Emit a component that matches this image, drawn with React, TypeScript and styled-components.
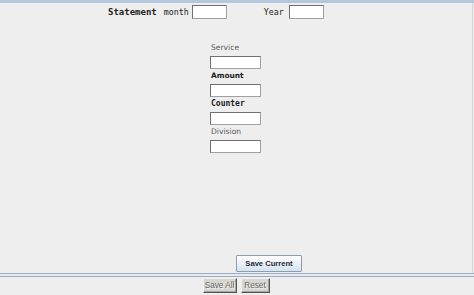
import React from 'react';
import styled, { createGlobalStyle } from 'styled-components';

const GlobalStyle = createGlobalStyle`
  html, body {
    margin: 0;
    padding: 0;
    background: #eeeeee;
  }
  * {
    box-sizing: border-box;
  }
`;

const Frame = styled.div`
  width: 474px;
  height: 295px;
  display: flex;
  flex-direction: column;
  background: #eeeeee;
  font-family: "DejaVu Sans", sans-serif;
  color: #222;
  overflow: hidden;
`;

const TopBar = styled.div`
  height: 3px;
  background: #b5c7dc;
  flex-shrink: 0;
`;

const Main = styled.div`
  flex: 1;
  display: flex;
  flex-direction: column;
  border-right: 1px solid #d6d6d6;
  margin-right: 1px;
`;

const Header = styled.div`
  height: 18px;
  display: flex;
  align-items: center;
  padding-left: 108px;
`;

const MonoLabel = styled.span<{ $bold?: boolean; $gap?: number }>`
  font-family: "DejaVu Sans Mono", monospace;
  font-size: ${(p) => (p.$bold ? 9 : 8.3)}px;
  font-weight: ${(p) => (p.$bold ? 'bold' : 'normal')};
  color: #222;
  margin-right: ${(p) => p.$gap ?? 0}px;
  white-space: nowrap;
`;

const TextBox = styled.input<{ $w: number; $h?: number; $gap?: number }>`
  display: block;
  width: ${(p) => p.$w}px;
  height: ${(p) => p.$h ?? 14}px;
  padding: 0;
  font-size: 8px;
  margin: 0 ${(p) => p.$gap ?? 0}px 0 0;
  background: #ffffff;
  border: 1px solid #a0a0a0;
  border-top-color: #707070;
  border-left-color: #707070;
  outline: none;
`;

const Form = styled.div`
  margin-top: 22px;
  margin-left: 210px;
  display: flex;
  flex-direction: column;
`;

const Field = styled.div`
  display: flex;
  flex-direction: column;
  margin-bottom: 2px;
`;

const FieldLabel = styled.span<{ $kind: 'plain' | 'bold' | 'mono' }>`
  height: 10px;
  line-height: 10px;
  padding-left: 1px;
  margin-bottom: 3px;
  white-space: nowrap;
  font-family: ${(p) =>
    p.$kind === 'mono' ? '"DejaVu Sans Mono", monospace' : '"DejaVu Sans", sans-serif'};
  font-size: ${(p) => (p.$kind === 'plain' ? 7.6 : p.$kind === 'bold' ? 7.4 : 8)}px;
  font-weight: ${(p) => (p.$kind === 'plain' ? 'normal' : 600)};
  color: ${(p) => (p.$kind === 'plain' ? '#5a5a5a' : '#222')};
`;

const Spacer = styled.div`
  flex: 1;
`;

const SaveRow = styled.div`
  display: flex;
  padding-left: 236px;
  margin-bottom: 1px;
`;

const PrimaryButton = styled.button`
  width: 66px;
  height: 17px;
  padding: 0;
  white-space: nowrap;
  font-family: "Liberation Sans", Arial, sans-serif;
  font-size: 7.6px;
  font-weight: bold;
  color: #1e2a3a;
  background: linear-gradient(#ffffff, #d6e2ef);
  border: 1px solid #8d9cae;
  border-radius: 1px;
`;

const Divider = styled.div`
  height: 4px;
  border-top: 1px solid #9eafc3;
  border-bottom: 1px solid #9eafc3;
  background: #e4ebf2;
  flex-shrink: 0;
`;

const Footer = styled.div`
  height: 18px;
  display: flex;
  justify-content: center;
  align-items: flex-start;
  gap: 4px;
  padding-top: 1px;
  padding-right: 2px;
  flex-shrink: 0;
`;

const GreyButton = styled.button<{ $w: number }>`
  width: ${(p) => p.$w}px;
  height: 15px;
  padding: 0;
  white-space: nowrap;
  font-family: "Liberation Sans", Arial, sans-serif;
  font-size: 8.2px;
  color: #666666;
  text-shadow: 1px 1px 0 #f4f4f4;
  background: #d8d6d0;
  border: 1px solid #f2f2f0;
  border-right-color: #555451;
  border-bottom-color: #555451;
  box-shadow: inset -1px -1px 0 #a6a49e;
`;

const fields: { label: string; kind: 'plain' | 'bold' | 'mono' }[] = [
  { label: 'Service', kind: 'plain' },
  { label: 'Amount', kind: 'bold' },
  { label: 'Counter', kind: 'mono' },
  { label: 'Division', kind: 'plain' },
];

export default function App() {
  return (
    <>
      <GlobalStyle />
      <Frame>
        <TopBar />
        <Main>
          <Header>
            <MonoLabel $bold $gap={7}>Statement</MonoLabel>
            <MonoLabel $gap={3}>month</MonoLabel>
            <TextBox $w={35} $gap={37} />
            <MonoLabel $gap={5}>Year</MonoLabel>
            <TextBox $w={35} />
          </Header>
          <Form>
            {fields.map((f) => (
              <Field key={f.label}>
                <FieldLabel $kind={f.kind}>{f.label}</FieldLabel>
                <TextBox $w={51} $h={13} />
              </Field>
            ))}
          </Form>
          <Spacer />
          <SaveRow>
            <PrimaryButton>Save Current</PrimaryButton>
          </SaveRow>
        </Main>
        <Divider />
        <Footer>
          <GreyButton $w={34}>Save All</GreyButton>
          <GreyButton $w={29}>Reset</GreyButton>
        </Footer>
      </Frame>
    </>
  );
}
